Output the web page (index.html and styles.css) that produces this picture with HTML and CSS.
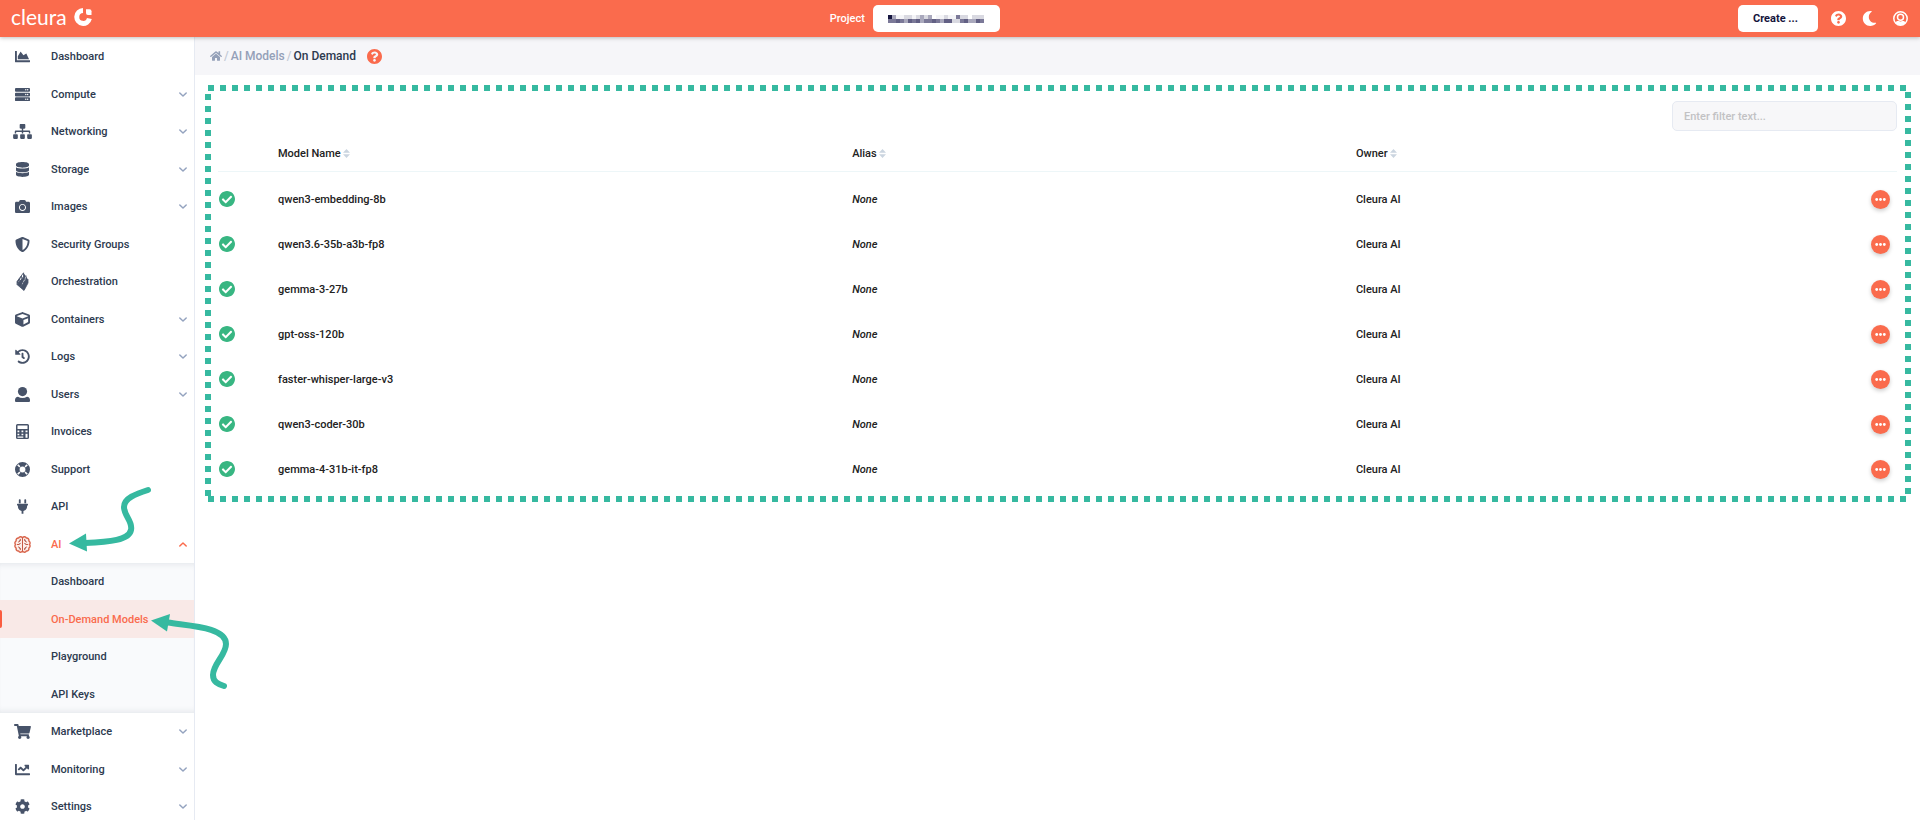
FILE: index.html
```html
<!DOCTYPE html>
<html lang="en">
<head>
    <meta charset="UTF-8">
    <title>Cleura - On Demand Models</title>
    <link rel="stylesheet" href="styles.css">
</head>
<body>
    <!-- Shared icons -->
    <svg class="sprite" aria-hidden="true">
        <symbol id="chevron" viewBox="0 0 10 6"><path d="M1 1l4 4 4-4" fill="none" stroke="currentColor" stroke-width="1.800" stroke-linecap="round" stroke-linejoin="round"/></symbol>
        <symbol id="sort" viewBox="0 0 7 9"><path d="M3.500 0L7 3.800H0zM3.500 9L0 5.200h7z"/></symbol>
        <symbol id="dots" viewBox="0 0 11 3"><circle cx="1.700" cy="1.500" r="1.400"/><circle cx="5.500" cy="1.500" r="1.400"/><circle cx="9.300" cy="1.500" r="1.400"/></symbol>
        <symbol id="check" viewBox="8 8 496 496"><path d="M504 256c0 136.967-111.033 248-248 248S8 392.967 8 256 119.033 8 256 8s248 111.033 248 248zM227.314 387.314l184-184c6.248-6.248 6.248-16.379 0-22.627l-22.627-22.627c-6.248-6.249-16.379-6.249-22.628 0L216 308.118l-70.059-70.059c-6.248-6.248-16.379-6.248-22.628 0l-22.627 22.627c-6.248 6.248-6.248 16.379 0 22.627l104 104c6.249 6.249 16.379 6.249 22.628.001z"/></symbol>
        <symbol id="help" viewBox="8 8 496 496"><path d="M504 256c0 136.997-111.043 248-248 248S8 392.997 8 256C8 119.083 119.043 8 256 8s248 111.083 248 248zM262.655 90c-54.497 0-89.255 22.957-116.549 63.758-3.536 5.286-2.353 12.415 2.715 16.258l34.699 26.310c5.205 3.947 12.621 3.008 16.665-2.122 17.864-22.658 30.113-35.797 57.303-35.797 20.429 0 45.698 13.148 45.698 32.958 0 14.976-12.363 22.667-32.534 33.976C247.128 238.528 216 254.941 216 296v4c0 6.627 5.373 12 12 12h56c6.627 0 12-5.373 12-12v-1.333c0-28.462 83.186-29.647 83.186-106.667 0-58.002-60.165-102-116.531-102zM256 338c-25.365 0-46 20.635-46 46 0 25.364 20.635 46 46 46s46-20.636 46-46c0-25.365-20.635-46-46-46z"/></symbol>
    </svg>

    <header class="topbar">
        <a href="#" class="logo">
            <span>cleura</span>
            <svg width="18" height="18" viewBox="0 0 18 18">
                <path d="M9 2.600A6.400 6.400 0 1 0 15.400 10.500" fill="none" stroke="#fff" stroke-width="5"/>
                <path d="M12 1.200h3.500a2 2 0 0 1 2 2V7H14a2 2 0 0 1-2-2z" fill="#fff"/>
            </svg>
        </a>

        <div class="project">
            <span id="projectLabel">Project</span>
            <button type="button" class="project-select" aria-labelledby="projectLabel">
                <svg width="96" height="8" viewBox="0 0 24 2" preserveAspectRatio="none" shape-rendering="crispEdges">
                    <path d="M0 0h1v1H0z" fill="#16163f"/>
                    <path d="M17 0h1v1h-1zM0 1h2v1H0zM3 1h1v1H3zM6 1h1v1H6zM9 1h2v1H9zM12 1h1v1h-1zM18 1h1v1h-1zM23 1h1v1h-1z" fill="#7b7998"/>
                    <path d="M2 1h1v1H2zM5 1h1v1H5zM7 1h1v1H7zM11 1h1v1h-1zM14 1h2v1h-2zM19 1h1v1h-1zM22 1h1v1h-1z" fill="#626084"/>
                    <path d="M1 0h1v1H1zM8 0h1v1H8zM10 0h1v1h-1zM4 1h1v1H4zM8 1h1v1H8zM13 1h1v1h-1zM20 1h2v1h-2z" fill="#a9a8bc"/>
                    <path d="M4 0h2v1H4zM7 0h1v1H7zM9 0h1v1H9zM14 0h1v1h-1zM18 0h2v1h-2zM21 0h3v1h-3zM16 1h2v1h-2z" fill="#d9d9e1"/>
                    <path d="M2 0h2v1H2zM6 0h1v1H6zM12 0h2v1h-2zM15 0h2v1h-2z" fill="#f4f4f7"/>
                </svg>
            </button>
        </div>

        <div class="tools">
            <button type="button" class="create-btn">Create ...</button>
            <a href="#" aria-label="Help"><svg width="15" height="15"><use href="#help"/></svg></a>
            <a href="#" aria-label="Dark mode"><svg width="15" height="15" viewBox="0 0 512 512"><path d="M283.211 512c78.962 0 151.079-35.925 198.857-94.792 7.068-8.708-.639-21.430-11.562-19.350-124.203 23.654-238.262-71.576-238.262-196.954 0-72.222 38.662-138.635 101.498-174.394 9.686-5.512 7.250-20.197-3.756-22.230A258.156 258.156 0 0 0 283.211 0c-141.309 0-256 114.511-256 256 0 141.309 114.511 256 256 256z"/></svg></a>
            <a href="#" aria-label="Account"><svg width="15" height="15" viewBox="0 0 15 15"><circle cx="7.500" cy="7.500" r="6.700" fill="none" stroke="currentColor" stroke-width="1.500"/><circle cx="7.500" cy="6.300" r="3" fill="none" stroke="currentColor" stroke-width="1.500"/><path d="M2.500 11.500c1-1.500 2.300-1.800 3.200-1.400 1.200.5 2.400.5 3.600 0 .9-.4 2.200-.1 3.200 1.400-1.200 1.800-3 2.700-5 2.700s-3.800-.9-5-2.700z"/></svg></a>
        </div>
    </header>

    <div class="layout">
        <nav class="sidebar">
            <ul class="menu">
                <li>
                    <a href="#" class="item">
                        <svg class="icon" width="15" height="15" viewBox="0 0 512 512"><path d="M500 384c6.600 0 12 5.400 12 12v40c0 6.600-5.400 12-12 12H12c-6.600 0-12-5.400-12-12V76c0-6.600 5.400-12 12-12h40c6.600 0 12 5.400 12 12v308h436zM372.700 159.500L288 216l-85.300-113.700c-5.100-6.800-15.500-6.300-19.900 1L96 248v104h384l-89.900-187.800c-3.200-6.500-11.400-8.700-17.400-4.700z"/></svg>
                        <span>Dashboard</span>
                    </a>
                </li>
                <li>
                    <a href="#" class="item">
                        <svg class="icon" width="15" height="15" viewBox="0 0 512 512"><path fill-rule="evenodd" d="M32 32h448a32 32 0 0 1 32 32v64a32 32 0 0 1-32 32H32a32 32 0 0 1-32-32V64a32 32 0 0 1 32-32zM32 192h448a32 32 0 0 1 32 32v64a32 32 0 0 1-32 32H32a32 32 0 0 1-32-32v-64a32 32 0 0 1 32-32zM32 352h448a32 32 0 0 1 32 32v64a32 32 0 0 1-32 32H32a32 32 0 0 1-32-32v-64a32 32 0 0 1 32-32zM432 72a24 24 0 1 0 0 48 24 24 0 0 0 0-48zM368 72a24 24 0 1 0 0 48 24 24 0 0 0 0-48zM432 232a24 24 0 1 0 0 48 24 24 0 0 0 0-48zM368 232a24 24 0 1 0 0 48 24 24 0 0 0 0-48zM432 392a24 24 0 1 0 0 48 24 24 0 0 0 0-48zM368 392a24 24 0 1 0 0 48 24 24 0 0 0 0-48z"/></svg>
                        <span>Compute</span>
                        <svg class="chevron" width="8" height="5"><use href="#chevron"/></svg>
                    </a>
                </li>
                <li>
                    <a href="#" class="item">
                        <svg class="icon" width="19" height="15" viewBox="0 0 640 512"><path d="M128 352H32c-17.670 0-32 14.330-32 32v96c0 17.670 14.330 32 32 32h96c17.670 0 32-14.330 32-32v-96c0-17.670-14.330-32-32-32zm-24-80h192v48h48v-48h192v48h48v-57.590c0-21.170-17.230-38.410-38.410-38.410H344v-64h40c17.670 0 32-14.330 32-32V32c0-17.670-14.330-32-32-32H256c-17.670 0-32 14.330-32 32v96c0 17.670 14.330 32 32 32h40v64H94.410C73.230 224 56 241.230 56 262.410V320h48v-48zm264 80h-96c-17.670 0-32 14.330-32 32v96c0 17.670 14.330 32 32 32h96c17.670 0 32-14.330 32-32v-96c0-17.670-14.330-32-32-32zm240 0h-96c-17.670 0-32 14.330-32 32v96c0 17.670 14.330 32 32 32h96c17.670 0 32-14.330 32-32v-96c0-17.670-14.330-32-32-32z"/></svg>
                        <span>Networking</span>
                        <svg class="chevron" width="8" height="5"><use href="#chevron"/></svg>
                    </a>
                </li>
                <li>
                    <a href="#" class="item">
                        <svg class="icon" width="13" height="15" viewBox="0 0 448 512"><path d="M448 73.143v45.714C448 159.143 347.667 192 224 192S0 159.143 0 118.857V73.143C0 32.857 100.333 0 224 0s224 32.857 224 73.143zM448 176v102.857C448 319.143 347.667 352 224 352S0 319.143 0 278.857V176c48.125 33.143 136.208 48.572 224 48.572S399.874 209.143 448 176zm0 160v102.857C448 479.143 347.667 512 224 512S0 479.143 0 438.857V336c48.125 33.143 136.208 48.572 224 48.572S399.874 369.143 448 336z"/></svg>
                        <span>Storage</span>
                        <svg class="chevron" width="8" height="5"><use href="#chevron"/></svg>
                    </a>
                </li>
                <li>
                    <a href="#" class="item">
                        <svg class="icon" width="15" height="15" viewBox="0 0 512 512"><path d="M512 144v288c0 26.500-21.500 48-48 48H48c-26.500 0-48-21.500-48-48V144c0-26.500 21.500-48 48-48h88l12.300-32.900c7-18.700 24.900-31.100 44.900-31.100h125.500c20 0 37.900 12.400 44.900 31.100L376 96h88c26.500 0 48 21.500 48 48zM376 288c0-66.200-53.800-120-120-120s-120 53.800-120 120 53.800 120 120 120 120-53.800 120-120zm-32 0c0 48.500-39.500 88-88 88s-88-39.500-88-88 39.500-88 88-88 88 39.500 88 88z"/></svg>
                        <span>Images</span>
                        <svg class="chevron" width="8" height="5"><use href="#chevron"/></svg>
                    </a>
                </li>
                <li>
                    <a href="#" class="item">
                        <svg class="icon" width="15" height="15" viewBox="0 0 512 512"><path d="M466.500 83.700l-192-80a48.150 48.150 0 0 0-36.900 0l-192 80C27.700 91.100 16 108.600 16 128c0 198.500 114.500 335.700 221.500 380.300 11.800 4.900 25.100 4.900 36.900 0C360.100 472.600 496 349.300 496 128c0-19.400-11.700-36.900-29.500-44.300zM256.100 446.300l-.1-381 175.900 73.300c-3.300 151.400-82.100 261.100-175.800 307.700z"/></svg>
                        <span>Security Groups</span>
                    </a>
                </li>
                <li>
                    <a href="#" class="item">
                        <svg class="icon" width="13" height="19" viewBox="0 0 13 19" fill="none" stroke="currentColor" stroke-width=".8"><path d="M7.500.8L1 9.500v3L8 18.500l4-7.500V7.500M7.500.8v4.500L1 12.500M10 3.500v4L4.500 15M12 7.500L6.500 16.500M5 4.500l5.500 4.500M3 7.500l6.500 5M1.500 9.800L8.500 15M5.300 4v9.500M7.500 5.500l4.500 3.500M3.300 6.800v7.200M8 7.500v10"/></svg>
                        <span>Orchestration</span>
                    </a>
                </li>
                <li>
                    <a href="#" class="item">
                        <svg class="icon" width="15" height="15" viewBox="0 0 512 512"><path d="M239.100 6.300l-208 78c-18.700 7-31.100 25-31.100 45v225.100c0 18.200 10.300 34.800 26.500 42.900l208 104c13.500 6.800 29.400 6.800 42.900 0l208-104c16.300-8.100 26.500-24.800 26.500-42.900V129.300c0-20-12.400-37.900-31.100-44.900l-208-78C262 2.200 250 2.200 239.100 6.300zM256 68.400l192 72v1.100l-192 78-192-78v-1.100l192-72zm32 356V275.500l160-65v133.900l-160 80z"/></svg>
                        <span>Containers</span>
                        <svg class="chevron" width="8" height="5"><use href="#chevron"/></svg>
                    </a>
                </li>
                <li>
                    <a href="#" class="item">
                        <svg class="icon" width="15" height="15" viewBox="0 0 512 512"><path d="M504 255.531c.253 136.640-111.180 248.372-247.820 248.468-59.015.042-113.223-20.530-155.822-54.911-11.077-8.940-11.905-25.541-1.839-35.607l11.267-11.267c8.609-8.609 22.353-9.551 31.891-1.984C173.062 425.135 212.781 440 256 440c101.705 0 184-82.311 184-184 0-101.705-82.311-184-184-184-48.814 0-93.149 18.969-126.068 49.932l50.754 50.754c10.080 10.080 2.941 27.314-11.313 27.314H24c-8.837 0-16-7.163-16-16V38.627c0-14.254 17.234-21.393 27.314-11.314l49.372 49.372C129.209 34.136 189.552 8 256 8c136.810 0 247.747 110.780 248 247.531zm-180.912 78.784l9.823-12.630c8.138-10.463 6.253-25.542-4.210-33.679L288 256.349V152c0-13.255-10.745-24-24-24h-16c-13.255 0-24 10.745-24 24v135.651l65.409 50.874c10.463 8.137 25.541 6.253 33.679-4.210z"/></svg>
                        <span>Logs</span>
                        <svg class="chevron" width="8" height="5"><use href="#chevron"/></svg>
                    </a>
                </li>
                <li>
                    <a href="#" class="item">
                        <svg class="icon" width="15" height="15" viewBox="0 0 15 15"><circle cx="7.500" cy="4.600" r="4.600"/><path d="M3 9.800c2.600 1.600 6.400 1.600 9 0 1.800.2 3 1.600 3 3.300V14a1 1 0 0 1-1 1H1a1 1 0 0 1-1-1v-.9c0-1.700 1.200-3.100 3-3.300z"/></svg>
                        <span>Users</span>
                        <svg class="chevron" width="8" height="5"><use href="#chevron"/></svg>
                    </a>
                </li>
                <li>
                    <a href="#" class="item">
                        <svg class="icon" width="13" height="15" viewBox="0 0 13 15"><path fill-rule="evenodd" d="M1.500 0h10A1.500 1.500 0 0 1 13 1.500v12a1.500 1.500 0 0 1-1.500 1.500h-10A1.500 1.500 0 0 1 0 13.500v-12A1.500 1.500 0 0 1 1.500 0zM1.500 1.500v3.500h10V1.500zM1.500 6.500v1.800h1.800V6.500zM5.500 6.500v1.800h1.800V6.500zM9.500 6.500v1.800h2V6.500zM1.500 9.700v1.500h1.800V9.700zM5.500 9.700v1.500h1.800V9.700zM1.500 12.500v1.200h5.800v-1.200zM9.500 9.700v4h2v-4z"/></svg>
                        <span>Invoices</span>
                    </a>
                </li>
                <li>
                    <a href="#" class="item">
                        <svg class="icon" width="15" height="15" viewBox="0 0 15 15"><circle cx="7.500" cy="7.500" r="5.200" fill="none" stroke="currentColor" stroke-width="4.600"/><path d="M2.700 2.700l2.200 2.200M12.300 2.700l-2.200 2.200M2.700 12.300l2.200-2.200M12.300 12.300l-2.200-2.200" stroke="#fff" stroke-width="1.600"/></svg>
                        <span>Support</span>
                    </a>
                </li>
                <li>
                    <a href="#" class="item">
                        <svg class="icon" width="11" height="15" viewBox="0 0 384 512"><path d="M256 144V32c0-17.673 14.327-32 32-32s32 14.327 32 32v112h-64zm112 16H16c-8.837 0-16 7.163-16 16v32c0 8.837 7.163 16 16 16h16v32c0 77.406 54.969 141.971 128 156.800V512h64v-99.200c73.031-14.829 128-79.394 128-156.800v-32h16c8.837 0 16-7.163 16-16v-32c0-8.837-7.163-16-16-16zm-240-16V32c0-17.673-14.327-32-32-32S64 14.327 64 32v112h64z"/></svg>
                        <span>API</span>
                    </a>
                </li>
                <li class="open">
                    <a href="#" class="item">
                        <svg class="icon" width="17" height="17" viewBox="0 0 17 17" fill="none" stroke-linecap="round" stroke-linejoin="round">
                            <path d="M8.500 1.800C7.400.3 5.300.5 4.700 2 3 1.700 1.700 3.200 2.200 4.900.8 5.600.5 7.400 1.500 8.500.5 9.600.8 11.400 2.200 12.100 1.700 13.800 3 15.300 4.700 15c.6 1.500 2.700 1.700 3.800.2 1.100 1.500 3.200 1.300 3.800-.2 1.700.3 3-1.200 2.500-2.900 1.400-.7 1.700-2.500.7-3.600 1-1.100.7-2.900-.7-3.600.5-1.700-.8-3.200-2.500-2.900C11.700.5 9.600.3 8.500 1.800z" fill="#fdeee9" stroke="#d9644b" stroke-width="1.400"/>
                            <path d="M8.500 2v13M6.300 3.300v1.500L4.500 6M3.300 8.500h1.900l1.200-1.300M6.300 13.700v-1.500L4.500 11M10.700 3.300v1.500L12.500 6M13.700 8.500h-1.900l-1.200-1.300M10.700 13.700v-1.500l1.800-1.200" stroke="#c65a45"/>
                        </svg>
                        <span>AI</span>
                        <svg class="chevron" width="8" height="5"><use href="#chevron"/></svg>
                    </a>
                    <ul class="submenu">
                        <li><a href="#" class="item">Dashboard</a></li>
                        <li><a href="#" class="item active">On-Demand Models</a></li>
                        <li><a href="#" class="item">Playground</a></li>
                        <li><a href="#" class="item">API Keys</a></li>
                    </ul>
                </li>
                <li>
                    <a href="#" class="item">
                        <svg class="icon" width="17" height="15" viewBox="0 0 576 512"><path d="M528.120 301.319l47.273-208C578.806 78.301 567.391 64 551.990 64H159.208l-9.166-44.810C147.758 8.021 137.930 0 126.529 0H24C10.745 0 0 10.745 0 24v16c0 13.255 10.745 24 24 24h69.883l70.248 343.435C147.325 417.100 136 435.222 136 456c0 30.928 25.072 56 56 56s56-25.072 56-56c0-15.674-6.447-29.835-16.824-40h209.647C430.447 426.165 424 440.326 424 456c0 30.928 25.072 56 56 56s56-25.072 56-56c0-22.172-12.888-41.332-31.579-50.405l5.517-24.276c3.413-15.018-8.002-29.319-23.403-29.319H218.117l-6.545-32h293.145c11.206 0 20.920-7.754 23.403-18.681z"/></svg>
                        <span>Marketplace</span>
                        <svg class="chevron" width="8" height="5"><use href="#chevron"/></svg>
                    </a>
                </li>
                <li>
                    <a href="#" class="item">
                        <svg class="icon" width="15" height="15" viewBox="0 0 512 512"><path d="M496 384H64V80c0-8.840-7.160-16-16-16H16C7.160 64 0 71.160 0 80v336c0 17.670 14.330 32 32 32h464c8.840 0 16-7.160 16-16v-32c0-8.840-7.160-16-16-16zM464 96H345.940c-21.380 0-32.090 25.850-16.970 40.970l32.400 32.400L288 242.750l-73.370-73.370c-12.500-12.500-32.760-12.500-45.250 0l-68.690 68.690c-6.250 6.250-6.250 16.380 0 22.630l22.620 22.620c6.250 6.250 16.380 6.250 22.630 0L192 237.250l73.370 73.370c12.500 12.500 32.760 12.500 45.250 0l96-96 32.400 32.400c15.120 15.120 40.970 4.410 40.970-16.970V112c.010-8.840-7.150-16-15.990-16z"/></svg>
                        <span>Monitoring</span>
                        <svg class="chevron" width="8" height="5"><use href="#chevron"/></svg>
                    </a>
                </li>
                <li>
                    <a href="#" class="item">
                        <svg class="icon" width="15" height="15" viewBox="0 0 512 512"><path d="M487.400 315.700l-42.600-24.600c4.300-23.200 4.300-47 0-70.200l42.600-24.600c4.900-2.800 7.100-8.600 5.500-14-11.100-35.600-30-67.800-54.700-94.600-3.800-4.100-10-5.100-14.800-2.300L380.800 110c-17.900-15.400-38.500-27.300-60.800-35.100V25.800c0-5.600-3.900-10.500-9.400-11.700-36.700-8.200-74.300-7.800-109.200 0-5.500 1.200-9.400 6.100-9.400 11.700V75c-22.200 7.900-42.800 19.800-60.800 35.100L88.700 85.500c-4.900-2.800-11-1.900-14.800 2.300-24.700 26.700-43.600 58.900-54.700 94.600-1.700 5.400.6 11.200 5.500 14L67.300 221c-4.300 23.200-4.300 47 0 70.200l-42.600 24.600c-4.900 2.800-7.100 8.600-5.500 14 11.100 35.600 30 67.800 54.700 94.600 3.800 4.100 10 5.100 14.800 2.300l42.600-24.600c17.900 15.400 38.500 27.300 60.800 35.100v49.200c0 5.600 3.900 10.500 9.400 11.700 36.700 8.200 74.300 7.800 109.200 0 5.500-1.200 9.400-6.100 9.400-11.700v-49.200c22.200-7.900 42.800-19.800 60.800-35.100l42.600 24.600c4.900 2.800 11 1.900 14.800-2.300 24.700-26.700 43.600-58.900 54.700-94.600 1.500-5.500-.7-11.300-5.600-14.100zM256 336c-44.100 0-80-35.900-80-80s35.900-80 80-80 80 35.900 80 80-35.900 80-80 80z"/></svg>
                        <span>Settings</span>
                        <svg class="chevron" width="8" height="5"><use href="#chevron"/></svg>
                    </a>
                </li>
            </ul>
        </nav>

        <main class="content">
            <div class="breadcrumb">
                <a href="#" aria-label="Home"><svg width="12" height="12" viewBox="0 0 576 512"><path d="M280.370 148.260L96 300.110V464a16 16 0 0 0 16 16l112.060-.29a16 16 0 0 0 15.920-16V368a16 16 0 0 1 16-16h64a16 16 0 0 1 16 16v95.640a16 16 0 0 0 16 16.050L464 480a16 16 0 0 0 16-16V300L295.670 148.260a12.190 12.190 0 0 0-15.300 0zM571.600 251.470L488 182.560V44.050a12 12 0 0 0-12-12h-56a12 12 0 0 0-12 12v72.610L318.470 43a48 48 0 0 0-61 0L4.340 251.470a12 12 0 0 0-1.600 16.900l25.500 31A12 12 0 0 0 45.150 301l235.220-193.740a12.190 12.190 0 0 1 15.300 0L530.900 301a12 12 0 0 0 16.900-1.600l25.500-31a12 12 0 0 0-1.700-16.930z"/></svg></a>
                <span class="sep">/</span>
                <a href="#">AI Models</a>
                <span class="sep">/</span>
                <span class="current">On Demand</span>
                <a href="#" class="help" aria-label="Help"><svg width="15" height="15"><use href="#help"/></svg></a>
            </div>

            <section class="panel">
                <div class="filter">
                    <input type="text" placeholder="Enter filter text..." aria-label="Filter models">
                </div>

                <table>
                    <thead>
                        <tr>
                            <th class="col-status"></th>
                            <th class="col-name">Model Name <svg class="sort" width="7" height="9"><use href="#sort"/></svg></th>
                            <th class="col-alias">Alias <svg class="sort" width="7" height="9"><use href="#sort"/></svg></th>
                            <th>Owner <svg class="sort" width="7" height="9"><use href="#sort"/></svg></th>
                            <th class="col-actions"></th>
                        </tr>
                    </thead>
                    <tbody>
                        <tr>
                            <td><svg class="ok" width="16" height="16"><use href="#check"/></svg></td>
                            <td>qwen3-embedding-8b</td>
                            <td><em>None</em></td>
                            <td>Cleura AI</td>
                            <td><button type="button" class="more" aria-label="Actions"><svg width="11" height="3"><use href="#dots"/></svg></button></td>
                        </tr>
                        <tr>
                            <td><svg class="ok" width="16" height="16"><use href="#check"/></svg></td>
                            <td>qwen3.6-35b-a3b-fp8</td>
                            <td><em>None</em></td>
                            <td>Cleura AI</td>
                            <td><button type="button" class="more" aria-label="Actions"><svg width="11" height="3"><use href="#dots"/></svg></button></td>
                        </tr>
                        <tr>
                            <td><svg class="ok" width="16" height="16"><use href="#check"/></svg></td>
                            <td>gemma-3-27b</td>
                            <td><em>None</em></td>
                            <td>Cleura AI</td>
                            <td><button type="button" class="more" aria-label="Actions"><svg width="11" height="3"><use href="#dots"/></svg></button></td>
                        </tr>
                        <tr>
                            <td><svg class="ok" width="16" height="16"><use href="#check"/></svg></td>
                            <td>gpt-oss-120b</td>
                            <td><em>None</em></td>
                            <td>Cleura AI</td>
                            <td><button type="button" class="more" aria-label="Actions"><svg width="11" height="3"><use href="#dots"/></svg></button></td>
                        </tr>
                        <tr>
                            <td><svg class="ok" width="16" height="16"><use href="#check"/></svg></td>
                            <td>faster-whisper-large-v3</td>
                            <td><em>None</em></td>
                            <td>Cleura AI</td>
                            <td><button type="button" class="more" aria-label="Actions"><svg width="11" height="3"><use href="#dots"/></svg></button></td>
                        </tr>
                        <tr>
                            <td><svg class="ok" width="16" height="16"><use href="#check"/></svg></td>
                            <td>qwen3-coder-30b</td>
                            <td><em>None</em></td>
                            <td>Cleura AI</td>
                            <td><button type="button" class="more" aria-label="Actions"><svg width="11" height="3"><use href="#dots"/></svg></button></td>
                        </tr>
                        <tr>
                            <td><svg class="ok" width="16" height="16"><use href="#check"/></svg></td>
                            <td>gemma-4-31b-it-fp8</td>
                            <td><em>None</em></td>
                            <td>Cleura AI</td>
                            <td><button type="button" class="more" aria-label="Actions"><svg width="11" height="3"><use href="#dots"/></svg></button></td>
                        </tr>
                    </tbody>
                </table>
            </section>
        </main>
    </div>

    <!-- Arrows pointing at the AI menu and the On-Demand Models entry -->
    <svg class="arrows" width="240" height="700" viewBox="0 0 240 700" aria-hidden="true">
        <path class="line" d="M148 490C136 494 124 498 124 507C124 516 133 521 131 530C129 540 110 542 85 543"/>
        <path class="head" d="M69 543.500L86 533.500L87 551.500z"/>
        <path class="line" d="M168 622.500C190 626 226 627 226 644C226 655 213 664 213 675C213 682 218 684 224 686"/>
        <path class="head" d="M151 620.500L170 614L167 631.500z"/>
    </svg>
</body>
</html>
```

FILE: styles.css
```css
* {
    box-sizing: border-box;
}
body {
    margin: 0;
    height: 100vh;
    display: flex;
    flex-direction: column;
    overflow: hidden;
    position: relative;
    font-family: Roboto, "Liberation Sans", sans-serif;
    font-size: 11px;
    font-weight: 500;
    color: #222;
    background-color: #fff;
}
a {
    color: inherit;
    text-decoration: none;
}
button, input {
    font: inherit;
}
svg {
    display: block;
    fill: currentColor;
}
.sprite {
    position: absolute;
    width: 0;
    height: 0;
}

/* Top bar */
.topbar {
    flex: none;
    height: 37px;
    padding: 0 12px 0 11px;
    display: flex;
    justify-content: space-between;
    align-items: center;
    background-color: #fa6b4d;
    color: #fff;
    box-shadow: 0 1px 4px rgba(0,0,0,0.25);
    z-index: 2;
}
.logo {
    display: flex;
    align-items: center;
    gap: 7px;
    padding-bottom: 4px;
    font-family: Lato, sans-serif;
    font-size: 21px;
    font-weight: 400;
    line-height: 24px;
}
.project {
    display: flex;
    align-items: center;
    gap: 8px;
}
.project-select {
    width: 127px;
    height: 27px;
    padding: 0 15px;
    border: none;
    border-radius: 5px;
    background-color: #fff;
}
.tools {
    display: flex;
    align-items: center;
    gap: 16px;
}
.create-btn {
    width: 80px;
    height: 27px;
    margin-right: -3px;
    padding: 0 15px;
    border: none;
    border-radius: 5px;
    background-color: #fff;
    color: #14143c;
    font-weight: 700;
    text-align: left;
}

/* Sidebar */
.layout {
    flex: 1;
    min-height: 0;
    display: flex;
}
.sidebar {
    flex: none;
    width: 195px;
    border-right: 1px solid #e6eaf2;
    overflow: hidden;
}
.menu, .submenu {
    margin: 0;
    padding: 0;
    list-style: none;
}
.menu {
    padding-top: 1px;
}
.item {
    height: 37px;
    padding-right: 7px;
    display: flex;
    align-items: center;
    color: #2d3a4f;
}
li:nth-child(even) > .item {
    height: 38px;
}
.item .icon {
    flex: none;
    margin: 0 auto;
    color: #475369;
}
.item span {
    width: 128px;
    margin-left: 6px;
}
.item .icon + span:last-child {
    margin-right: 8px;
}
.item .chevron {
    color: #94a3bf;
}
.open > .item, .open > .item .chevron {
    color: #fa6b4d;
}
.open > .item .chevron {
    transform: rotate(180deg);
}
.submenu {
    background-color: #f9fafc;
    box-shadow: inset 0 6px 6px -5px rgba(60,70,100,0.12), inset 0 -6px 6px -5px rgba(60,70,100,0.12);
}
.submenu .item {
    padding-left: 51px;
}
.submenu .active {
    position: relative;
    background-color: #f9e9e7;
    color: #fa6b4d;
}
.submenu .active::before {
    content: "";
    position: absolute;
    left: 0;
    top: 10px;
    width: 2px;
    height: 18px;
    border-radius: 0 2px 2px 0;
    background-color: #fa5c40;
}

/* Main area */
.content {
    flex: 1;
    min-width: 0;
}
.breadcrumb {
    height: 38px;
    padding-left: 15px;
    display: flex;
    align-items: center;
    gap: 2px;
    background-color: #f6f6f9;
    color: #94a0b8;
    font-size: 12px;
}
.breadcrumb .sep {
    color: #c3cad6;
}
.breadcrumb .current {
    color: #2d3a4f;
}
.breadcrumb .help {
    margin-left: 9px;
    color: #fa6b4d;
}
.panel {
    position: relative;
    margin: 10px 9px 0 10px;
    padding: 16px 14px 10px 13px;
}
/* Dotted frame, horizontal and vertical sides */
.panel::before, .panel::after {
    content: "";
    position: absolute;
    pointer-events: none;
}
.panel::before {
    inset: 0;
    background-image: linear-gradient(90deg, #36b9a0 6px, transparent 6px), linear-gradient(90deg, #36b9a0 6px, transparent 6px);
    background-size: 12px 6px;
    background-position: 3px 0, 3px 100%;
    background-repeat: repeat-x;
}
.panel::after {
    inset: 7px 0 5px;
    background-image: linear-gradient(#36b9a0 6px, transparent 6px), linear-gradient(#36b9a0 6px, transparent 6px);
    background-size: 6px 12px;
    background-position: 0 2px, 100% 0;
    background-repeat: repeat-y;
}
.filter {
    display: flex;
    justify-content: flex-end;
}
.filter input {
    width: 225px;
    height: 30px;
    padding: 0 11px;
    border: 1px solid #e6eaf2;
    border-radius: 5px;
    background-color: #f7f7f9;
}
.filter input::placeholder {
    color: #c2c2c4;
}
table {
    width: 100%;
    margin-top: 6px;
    border-collapse: collapse;
    table-layout: fixed;
}
th, td {
    padding: 0;
    text-align: left;
    font-weight: 500;
}
th {
    height: 34px;
    border-bottom: 1px solid #edf6f8;
}
tbody::before {
    content: "";
    display: block;
    height: 5px;
}
td {
    height: 45px;
}
.col-status {
    width: 60px;
}
.col-name {
    width: 34.2%;
}
.col-alias {
    width: 30%;
}
.col-actions {
    width: 26px;
}
.sort {
    display: inline-block;
    vertical-align: -1px;
    color: #cbd5e0;
}
.ok {
    margin-left: 1px;
    color: #38b682;
}
.more {
    width: 19px;
    height: 19px;
    padding: 0 4px;
    display: block;
    border: none;
    border-radius: 50%;
    background-color: #fa6b4d;
    color: #fff;
    box-shadow: 0 2px 4px rgba(0,0,0,0.2);
}

/* Arrows */
.arrows {
    position: absolute;
    left: 0;
    top: 0;
    z-index: 3;
    pointer-events: none;
}
.arrows .line {
    fill: none;
    stroke: #36b9a0;
    stroke-width: 6px;
    stroke-linecap: round;
}
.arrows .head {
    fill: #36b9a0;
}
```
